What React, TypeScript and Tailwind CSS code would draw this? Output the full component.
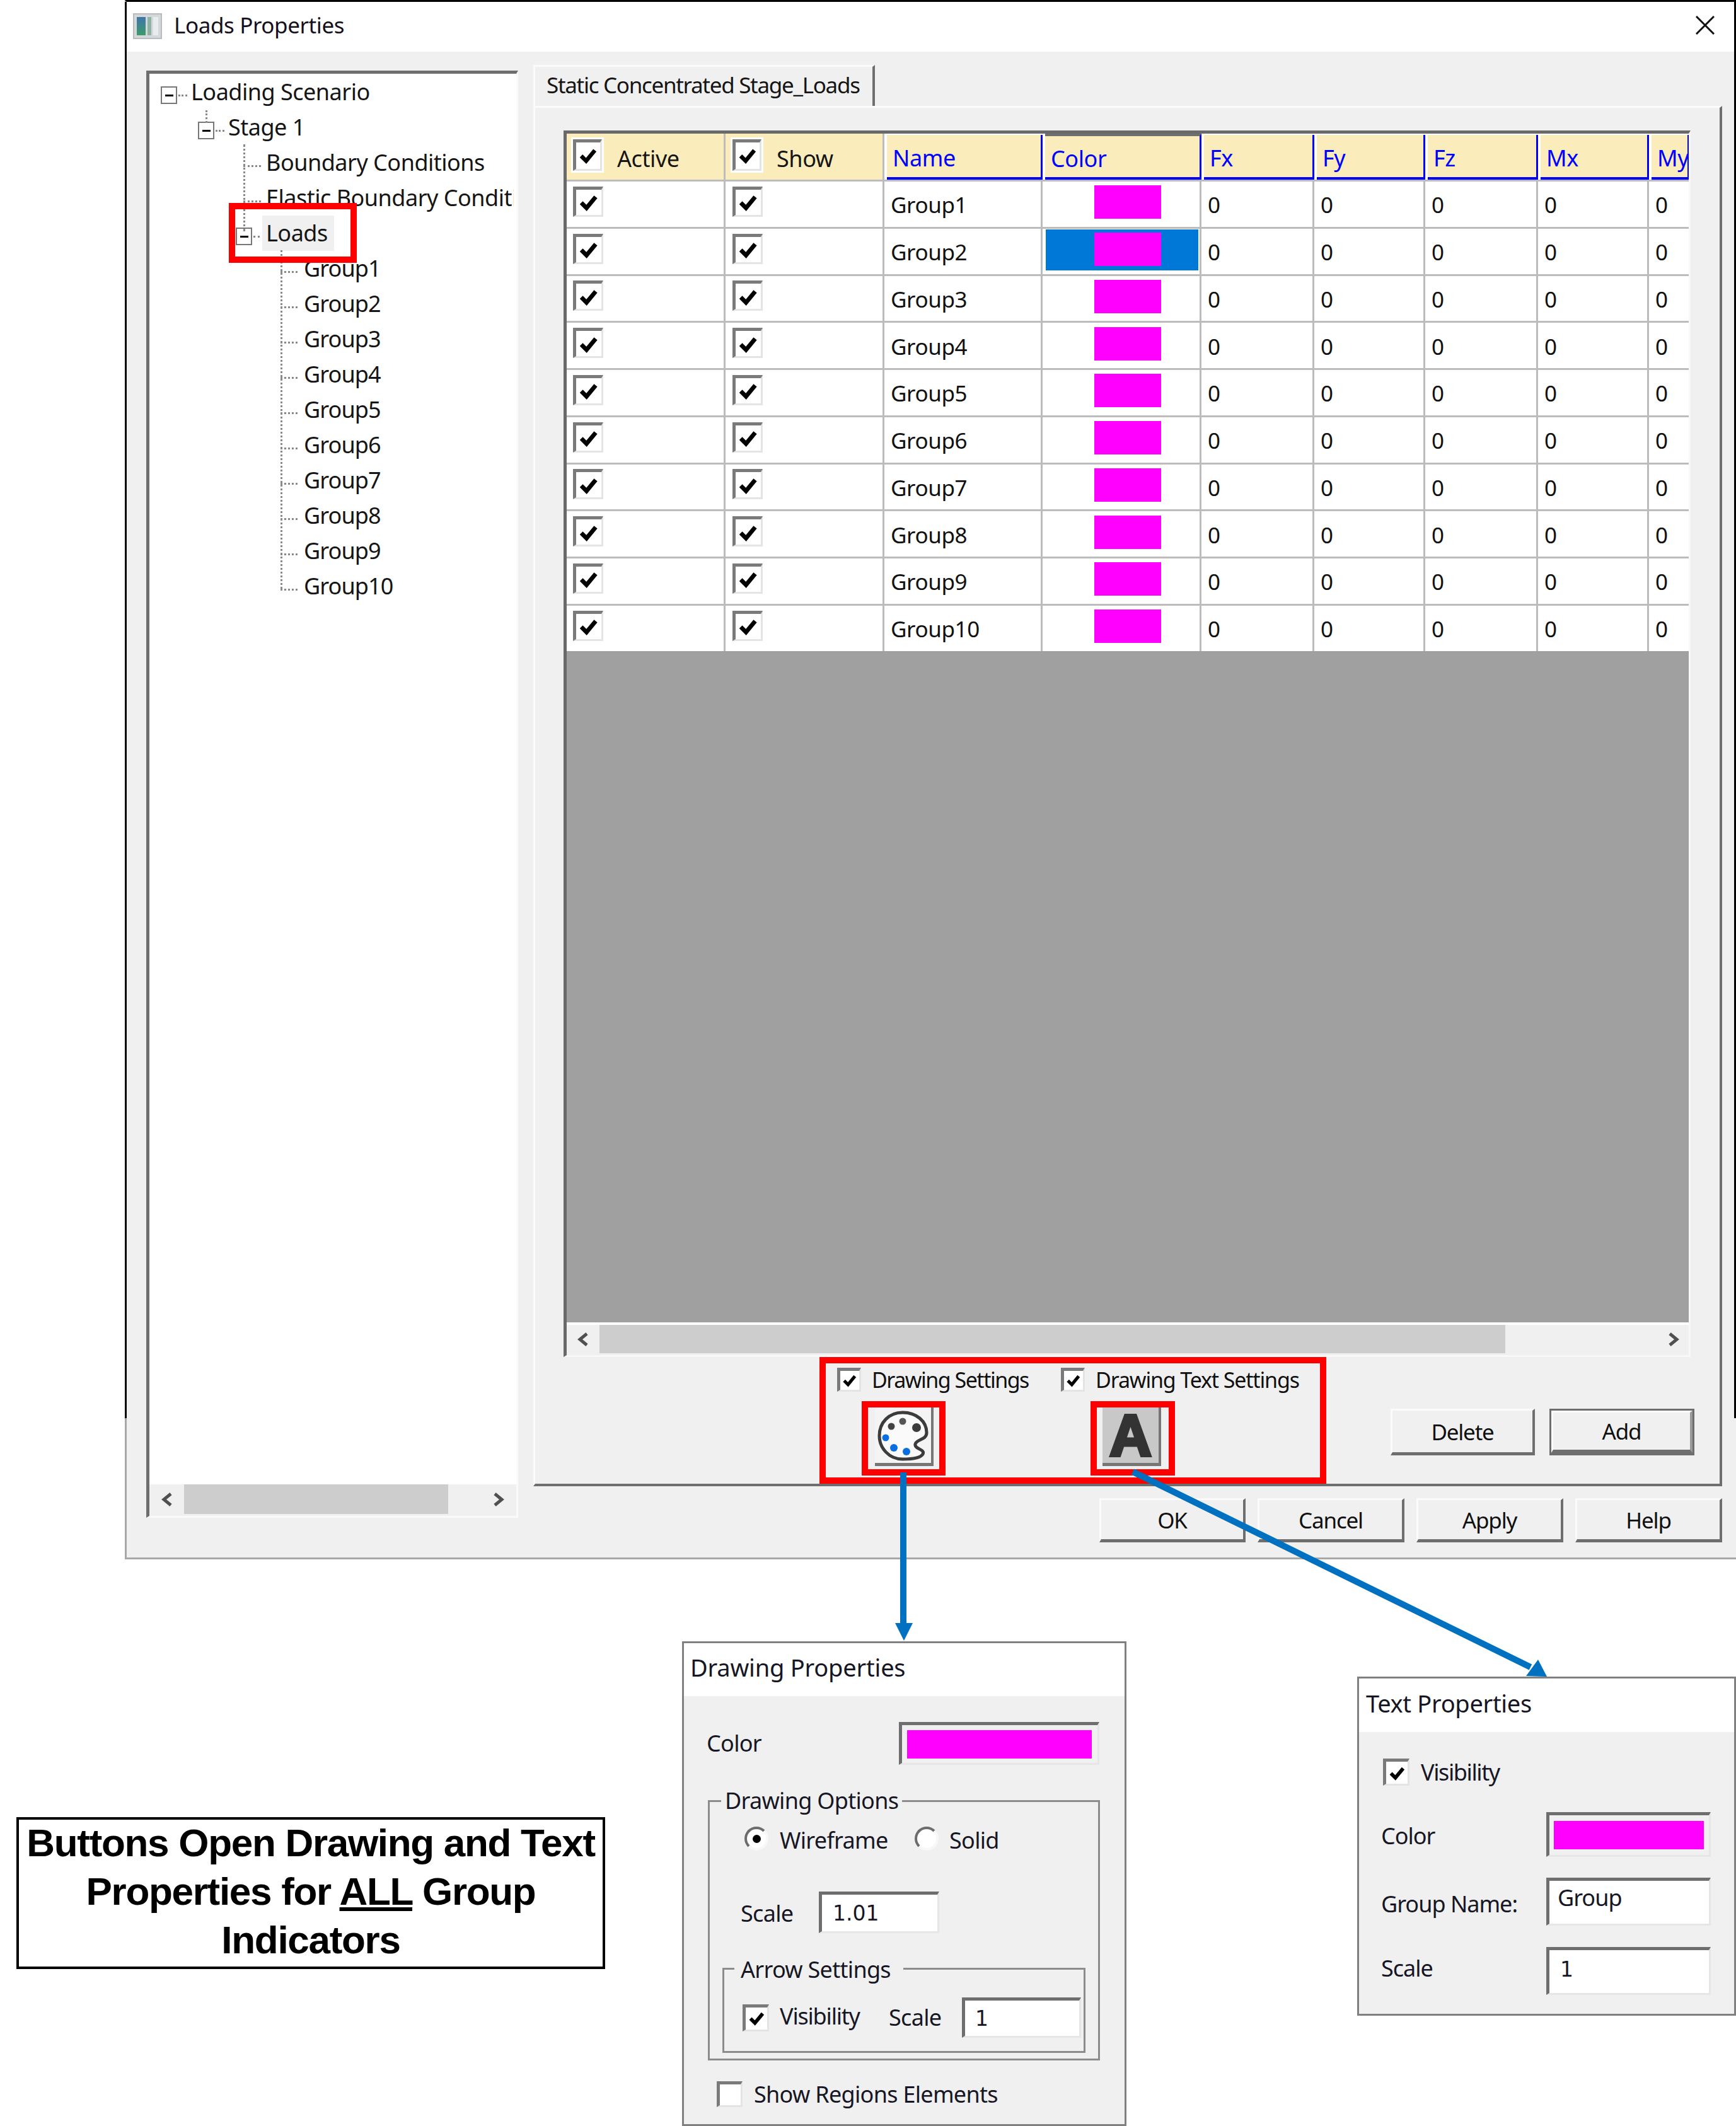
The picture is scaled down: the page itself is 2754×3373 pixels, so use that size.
import type { ReactNode } from "react";

const magenta = "bg-[#ff00ff]";
const gridCols = "grid grid-cols-[252px_252px_251px_252px_179px_176px_179px_176px_64px]";
const groups = ["Group1", "Group2", "Group3", "Group4", "Group5", "Group6", "Group7", "Group8", "Group9", "Group10"];

function Check({ size = "w-[48px] h-[48px]", checked = true, outlined = false }: { size?: string; checked?: boolean; outlined?: boolean }) {
  return (
    <span
      className={`${size} shrink-0 flex items-center justify-center bg-white border-t-[5px] border-l-[5px] border-r-[3px] border-b-[3px] border-t-[#7a7a7a] border-l-[#7a7a7a] border-r-[#e4e4e4] border-b-[#e4e4e4] ${outlined ? "outline-[3px] outline-white" : ""}`}
    >
      {checked && (
        <svg viewBox="0 0 30 30" className="w-[78%] h-[78%]">
          <path d="M4 16 L12 24 L26 7" fill="none" stroke="#000" strokeWidth="6.5" />
        </svg>
      )}
    </span>
  );
}

function Radio({ on = false }: { on?: boolean }) {
  return (
    <span className="w-[38px] h-[38px] shrink-0 rounded-full flex items-center justify-center bg-white border-[4px] border-t-[#6c6c6c] border-l-[#6c6c6c] border-r-[#f8f8f8] border-b-[#f8f8f8]">
      {on && <span className="w-[13px] h-[13px] rounded-full bg-black" />}
    </span>
  );
}

function WinButton({ label, className = "" }: { label: string; className?: string }) {
  return (
    <div
      className={`flex items-center justify-center bg-[#f0f0f0] border-t-[3px] border-l-[3px] border-r-[4px] border-b-[5px] border-t-[#fbfbfb] border-l-[#fbfbfb] border-r-[#6e6e6e] border-b-[#6e6e6e] text-[#101010] text-[35px] tracking-[-1.2px] ${className}`}
    >
      {label}
    </div>
  );
}

function Inset({ className = "", children }: { className?: string; children?: ReactNode }) {
  return (
    <div
      className={`shrink-0 flex items-center border-t-[5px] border-l-[5px] border-r-[3px] border-b-[3px] border-t-[#6e6e6e] border-l-[#6e6e6e] border-r-[#e6e6e6] border-b-[#e6e6e6] ${className}`}
    >
      {children}
    </div>
  );
}

function Chevron({ dir }: { dir: "left" | "right" }) {
  return (
    <svg viewBox="0 0 20 24" className="w-[20px] h-[24px] shrink-0">
      <path d={dir === "left" ? "M16 3 L5 12 L16 21" : "M4 3 L15 12 L4 21"} fill="none" stroke="#505050" strokeWidth="5" />
    </svg>
  );
}

function ExpandBox() {
  return (
    <span className="w-[26px] h-[28px] shrink-0 mt-[10px] flex items-center justify-center bg-white border-[2px] border-[#777777]">
      <span className="w-[13px] h-[3px] bg-black" />
    </span>
  );
}

function Dash({ className = "" }: { className?: string }) {
  return <span className={`h-0 border-t-[3px] border-dotted border-[#8a8a8a] shrink-0 ${className}`} />;
}

function TreePanel() {
  return (
    <div className="relative w-[590px] h-[2296px] flex flex-col border-t-[5px] border-l-[5px] border-r-[3px] border-b-[3px] border-t-[#6e6e6e] border-l-[#6e6e6e] border-r-[#fafafa] border-b-[#fafafa]">
      <div className="flex-1 min-h-0 bg-white pt-[1px] text-[36px] tracking-[-0.5px]">
        <div className="w-[578px] overflow-hidden whitespace-nowrap">
          <div className="h-[56px] flex items-center pl-[18px]">
            <ExpandBox />
            <Dash className="w-[14px] ml-[2px] mt-[10px] mr-[6px]" />
            Loading Scenario
          </div>
          <div className="h-[56px] flex items-center pl-[77px]">
            <ExpandBox />
            <Dash className="w-[14px] ml-[2px] mt-[10px] mr-[6px]" />
            Stage 1
          </div>
          <div className="h-[56px] flex items-center pl-[149px]">
            <Dash className="w-[28px] mt-[10px] mr-[8px]" />
            Boundary Conditions
          </div>
          <div className="h-[56px] flex items-center pl-[149px]">
            <Dash className="w-[28px] mt-[10px] mr-[8px]" />
            Elastic Boundary Conditions
          </div>
          <div className="h-[56px] flex items-center pl-[137px]">
            <ExpandBox />
            <Dash className="w-[10px] ml-[2px] mt-[10px] mr-[4px]" />
            <span className="h-[56px] flex items-center bg-[#f0f0f0] pl-[6px] pr-[10px]">Loads</span>
          </div>
          {groups.map((g) => (
            <div key={g} className="h-[56px] flex items-center pl-[208px] tracking-[-0.9px]">
              <Dash className="w-[27px] mt-[10px] mr-[10px]" />
              {g}
            </div>
          ))}
        </div>
        {/* tree guide lines */}
        <span className="absolute left-[149px] top-[112px] h-[138px] border-l-[3px] border-dotted border-[#8a8a8a]" />
        <span className="absolute left-[208px] top-[280px] h-[537px] border-l-[3px] border-dotted border-[#8a8a8a]" />
        <span className="absolute left-[89px] top-[58px] h-[20px] border-l-[3px] border-dotted border-[#8a8a8a]" />
      </div>
      <div className="h-[50px] shrink-0 flex items-center bg-[#f0f0f0] pb-[3px]">
        <span className="w-[55px] flex justify-center">
          <Chevron dir="left" />
        </span>
        <span className="w-[419px] h-[47px] bg-[#cdcdcd]" />
        <span className="flex-1 flex justify-center pl-[52px]">
          <Chevron dir="right" />
        </span>
      </div>
    </div>
  );
}

function HeaderCell({ label, selected = false }: { label: string; selected?: boolean }) {
  return (
    <div className={`bg-white pl-[4px] ${selected ? "" : "pt-[2px]"} h-[73px]`}>
      <div
        className={`h-full pl-[9px] pt-[6px] flex items-center overflow-hidden bg-[#fbecbb] text-[#0000ff] border-r-[3px] border-b-[4px] border-[#0000ff] ${selected ? "border-t-[4px] border-t-[#6e6e6e]" : ""}`}
      >
        {label}
      </div>
    </div>
  );
}

function HeaderCheck({ label, className }: { label: string; className: string }) {
  return (
    <div className={`h-[73px] flex items-center bg-[#fbecbb] border-r-[3px] border-[#bcbcbc] ${className}`}>
      <Check outlined size="w-[46px] h-[50px] mt-[-6px]" />
      <span className="ml-[24px] pt-[6px] text-[#151515]">{label}</span>
    </div>
  );
}

function DataGrid() {
  return (
    <div className="w-[1788px] h-[1946px] flex flex-col border-t-[5px] border-l-[5px] border-r-[3px] border-b-[3px] border-t-[#696969] border-l-[#696969] border-r-[#f8f8f8] border-b-[#f8f8f8] overflow-hidden text-[36px] tracking-[-0.4px]">
      <div className={`${gridCols} bg-white`}>
        <HeaderCheck label="Active" className="pl-[10px]" />
        <HeaderCheck label="Show" className="pl-[11px]" />
        <HeaderCell label="Name" />
        <HeaderCell label="Color" selected />
        <HeaderCell label="Fx" />
        <HeaderCell label="Fy" />
        <HeaderCell label="Fz" />
        <HeaderCell label="Mx" />
        <HeaderCell label="My" />
      </div>
      {groups.map((g) => (
        <div key={g} className={`${gridCols} h-[74.75px] bg-white border-t-[3px] border-[#bcbcbc] text-[35px] text-[#111111]`}>
          <div className="flex items-center pl-[10px] pb-[8px] border-r-[3px] border-[#bcbcbc]">
            <Check />
          </div>
          <div className="flex items-center pl-[11px] pb-[8px] border-r-[3px] border-[#bcbcbc]">
            <Check />
          </div>
          <div className="flex items-center pl-[10px] pt-[2px] border-r-[3px] border-[#bcbcbc]">{g}</div>
          <div className="flex items-center pl-[5px] pb-[4px] border-r-[3px] border-[#bcbcbc]">
            <div className={`w-[242px] h-[65px] flex items-center pl-[77px] pb-[2px] ${g === "Group2" ? "bg-[#0078d7]" : ""}`}>
              <span className={`w-[106px] h-[53px] ${magenta}`} />
            </div>
          </div>
          {[0, 1, 2, 3, 4].map((i) => (
            <div key={i} className={`flex items-center pl-[10px] pt-[2px] ${i < 4 ? "border-r-[3px] border-[#bcbcbc]" : ""}`}>
              0
            </div>
          ))}
        </div>
      ))}
      <div className="flex-1 bg-[#a0a0a0]" />
      <div className="h-[52px] shrink-0 flex items-center bg-[#f0f0f0] border-t-[4px] border-white pb-[3px]">
        <span className="w-[52px] flex justify-center">
          <Chevron dir="left" />
        </span>
        <span className="w-[1437px] h-[45px] bg-[#cdcdcd]" />
        <span className="flex-1 flex justify-center pl-[242px]">
          <Chevron dir="right" />
        </span>
      </div>
    </div>
  );
}

function PaletteIcon() {
  return (
    <svg viewBox="0 0 81 81" className="w-[81px] h-[81px]">
      <path
        d="M40 4 C62 4 78 18 78 36 C78 48 62 46 60 54 C58 62 76 62 72 70 C68 77 52 78 40 78 C18 78 3 60 3 41 C3 20 18 4 40 4 Z"
        fill="#fafafa"
        stroke="#3c3c3c"
        strokeWidth="5"
      />
      <circle cx="22" cy="26" r="5.5" fill="#444" />
      <circle cx="40" cy="18" r="5.5" fill="#555" />
      <circle cx="62" cy="28" r="7" fill="#3c3c3c" />
      <circle cx="13" cy="44" r="5.5" fill="#0a6ee0" />
      <circle cx="26" cy="60" r="6" fill="#0a6ee0" />
      <circle cx="46" cy="66" r="6" fill="#0a6ee0" />
    </svg>
  );
}

function RaisedIcon({ className = "", children }: { className?: string; children: ReactNode }) {
  return (
    <div className={`w-[93px] h-[93px] flex items-center justify-center border-r-[4px] border-b-[5px] border-r-[#767676] border-b-[#767676] ${className}`}>
      {children}
    </div>
  );
}

function TabPane() {
  return (
    <div className="w-[1886px] h-[2190px] pt-[36px] pl-[45px] border-t-[3px] border-l-[3px] border-r-[4px] border-b-[4px] border-t-[#fbfbfb] border-l-[#fbfbfb] border-r-[#6e6e6e] border-b-[#6e6e6e]">
      <DataGrid />
      <div className="flex text-[34px] tracking-[-1.5px] pt-[17px] pl-[434px] text-[#101010] whitespace-nowrap">
        <div className="w-[355px] shrink-0">
          <div className="flex items-center gap-[17px] h-[38px]">
            <Check size="w-[38px] h-[38px]" />
            <span>Drawing Settings</span>
          </div>
          <RaisedIcon className="ml-[60px] mt-[25px] bg-[#f4f4f4]">
            <PaletteIcon />
          </RaisedIcon>
        </div>
        <div className="w-[378px] shrink-0">
          <div className="flex items-center gap-[17px] h-[38px]">
            <Check size="w-[38px] h-[38px]" />
            <span className="tracking-[-1.15px]">Drawing Text Settings</span>
          </div>
          <RaisedIcon className="ml-[66px] mt-[25px] bg-[#c8c8c8]">
            <span className="font-['Liberation_Sans',sans-serif] font-bold text-[92px] leading-none text-[#333333] [-webkit-text-stroke:5px_#333333] tracking-normal">A</span>
          </RaisedIcon>
        </div>
        <div className="flex mt-[65px] gap-[23px] ml-[145px]">
          <WinButton label="Delete" className="w-[229px] h-[74px]" />
          <div className="w-[230px] h-[74px] border-[3px] border-[#6e6e6e] border-b-[4px]">
            <WinButton label="Add" className="w-full h-full border-t-[#eeeeee] border-l-[#eeeeee] border-r-[#9a9a9a]" />
          </div>
        </div>
      </div>
    </div>
  );
}

function LoadsDialog() {
  return (
    <div className="relative ml-[198px] w-[2556px] h-[2474px] flex flex-col border-t-[3px] border-l-[3px] border-b-[3px] border-[#a8a8a8] border-t-black bg-white">
      <span className="absolute left-[-3px] top-0 w-[3px] h-[2247px] bg-black" />
      <span className="absolute right-0 top-0 w-[3px] h-[2247px] bg-black" />
      <div className="h-[79px] shrink-0 flex items-center pl-[10px] pr-[34px] pb-[6px]">
        <div className="w-[46px] h-[41px] flex bg-[#d5d8da] border-[2px] border-[#b8bcbf] p-[4px] gap-[3px] mt-[4px]">
          <span className="w-[14px] bg-gradient-to-b from-[#3f74a8] to-[#3f9a68]" />
          <span className="w-[6px] bg-[#8fb2a4]" />
          <span className="flex-1 bg-[#e9ecec]" />
        </div>
        <span className="ml-[19px] text-[35px] tracking-[-0.4px] text-[#151020]">Loads Properties</span>
        <svg viewBox="0 0 30 30" className="ml-auto w-[30px] h-[30px]">
          <path d="M1 1 L29 29 M29 1 L1 29" stroke="#111" strokeWidth="3" fill="none" />
        </svg>
      </div>
      <div className="flex-1 flex bg-[#f0f0f0] pl-[31px] pt-[30px]">
        <TreePanel />
        <div className="ml-[24px] mt-[-9px] flex flex-col">
          <div className="w-[542px] h-[65px] flex items-center pl-[18px] pb-[6px] border-t-[3px] border-l-[3px] border-r-[4px] border-t-[#fbfbfb] border-l-[#fbfbfb] border-r-[#6e6e6e] text-[35px] tracking-[-1.3px] text-[#151515]">
            Static Concentrated Stage_Loads
          </div>
          <TabPane />
          <div className="flex justify-end gap-[19px] mt-[19px]">
            <WinButton label="OK" className="w-[232px] h-[70px]" />
            <WinButton label="Cancel" className="w-[233px] h-[70px]" />
            <WinButton label="Apply" className="w-[233px] h-[70px]" />
            <WinButton label="Help" className="w-[233px] h-[70px]" />
          </div>
        </div>
      </div>
    </div>
  );
}

function DrawingProperties() {
  return (
    <div className="ml-[122px] mt-[130px] w-[705px] h-[769px] shrink-0 flex flex-col border-[3px] border-[#808080] text-[36px] tracking-[-0.7px] text-[#161625]">
      <div className="h-[84px] shrink-0 flex items-center pl-[10px] pb-[8px] bg-white text-[38px] tracking-[-0.2px]">Drawing Properties</div>
      <div className="flex-1 bg-[#f0f0f0]">
        <div className="flex items-center mt-[41px] pl-[36px]">
          <span className="w-[305px]">Color</span>
          <Inset className="w-[318px] h-[68px] pl-[8px] pr-[9px]">
            <span className={`w-full h-[45px] ${magenta}`} />
          </Inset>
        </div>
        <div className="relative ml-[38px] mt-[56px] w-[622px] h-[413px] border-[3px] border-[#8c8c8c]">
          <span className="absolute left-[18px] top-[-20px] px-[6px] bg-[#f0f0f0]">Drawing Options</span>
          <div className="flex items-center mt-[37px] ml-[55px]">
            <span className="w-[270px] flex items-center gap-[18px]">
              <Radio on />
              <span className="pt-[6px]">Wireframe</span>
            </span>
            <span className="flex items-center gap-[17px]">
              <Radio />
              <span className="pt-[6px]">Solid</span>
            </span>
          </div>
          <div className="flex items-center mt-[63px] ml-[49px]">
            <span className="w-[124px] pt-[4px]">Scale</span>
            <Inset className="w-[191px] h-[66px] bg-white pl-[17px] font-['DejaVu_Sans',sans-serif] text-[33px] tracking-normal">1.01</Inset>
          </div>
          <div className="relative ml-[20px] mt-[55px] w-[576px] h-[135px] border-[3px] border-[#8c8c8c]">
            <span className="absolute left-[16px] top-[-18px] pl-[10px] pr-[20px] bg-[#f0f0f0]">Arrow Settings</span>
            <div className="flex items-center pl-[29px] pt-[44px]">
              <Check size="w-[42px] h-[43px]" />
              <span className="w-[173px] ml-[17px] tracking-[-1.2px] pb-[4px]">Visibility</span>
              <span className="w-[116px]">Scale</span>
              <Inset className="w-[189px] h-[64px] bg-white pl-[16px] font-['DejaVu_Sans',sans-serif] text-[33px] tracking-normal">1</Inset>
            </div>
          </div>
        </div>
        <div className="flex items-center gap-[18px] mt-[33px] ml-[52px]">
          <Check size="w-[41px] h-[41px]" checked={false} />
          Show Regions Elements
        </div>
      </div>
    </div>
  );
}

function TextProperties() {
  return (
    <div className="ml-[366px] mt-[186px] w-[601px] h-[538px] shrink-0 flex flex-col border-[3px] border-[#808080] text-[36px] tracking-[-1px] text-[#161625]">
      <div className="h-[85px] shrink-0 flex items-center pl-[11px] pb-[8px] bg-white text-[38px] tracking-[-0.3px]">Text Properties</div>
      <div className="flex-1 bg-[#f0f0f0]">
        <div className="flex items-center gap-[18px] mt-[42px] ml-[38px] tracking-[-1.4px]">
          <Check size="w-[42px] h-[43px]" />
          Visibility
        </div>
        <div className="flex items-center mt-[42px] pl-[35px]">
          <span className="w-[262px] pt-[4px]">Color</span>
          <Inset className="w-[261px] h-[71px] pl-[7px] pr-[8px]">
            <span className={`w-full h-[45px] ${magenta}`} />
          </Inset>
        </div>
        <div className="flex items-center mt-[33px] pl-[35px]">
          <span className="w-[262px] pt-[8px]">Group Name:</span>
          <Inset className="w-[261px] h-[76px] bg-white pl-[13px] pb-[14px]">Group</Inset>
        </div>
        <div className="flex items-center mt-[34px] pl-[35px]">
          <span className="w-[262px] pb-[8px]">Scale</span>
          <Inset className="w-[261px] h-[76px] bg-white pl-[17px] pb-[8px] font-['DejaVu_Sans',sans-serif] text-[33px] tracking-normal">1</Inset>
        </div>
      </div>
    </div>
  );
}

export default function App() {
  return (
    <div className="relative w-[2754px] h-[3373px] overflow-hidden bg-white font-['Noto_Sans',sans-serif] text-[34px] tracking-[-0.4px] leading-none text-[#151515]">
      <LoadsDialog />
      <div className="flex items-start">
        <div className="ml-[26px] mt-[409px] w-[934px] h-[241px] shrink-0 flex flex-col items-center justify-center pb-[6px] border-[4px] border-black font-['Liberation_Sans',sans-serif] font-bold text-[62px] leading-[77px] tracking-[-1.3px] text-black">
          <div>Buttons Open Drawing and Text</div>
          <div>
            Properties for <span className="underline">ALL</span> Group
          </div>
          <div>Indicators</div>
        </div>
        <DrawingProperties />
        <TextProperties />
      </div>

      {/* red callouts */}
      <div className="absolute left-[363px] top-[322px] w-[203px] h-[95px] border-[10px] border-[#fe0000]" />
      <div className="absolute left-[1300px] top-[2153px] w-[804px] h-[201px] border-[10px] border-[#fe0000]" />
      <div className="absolute left-[1367px] top-[2223px] w-[133px] h-[118px] border-[10px] border-[#fe0000]" />
      <div className="absolute left-[1730px] top-[2223px] w-[134px] h-[118px] border-[10px] border-[#fe0000]" />

      {/* blue arrows */}
      <svg className="absolute left-0 top-0 w-[2754px] h-[3373px] pointer-events-none" viewBox="0 0 2754 3373">
        <path d="M1433 2336 L1433 2580" stroke="#0070c0" strokeWidth="10" fill="none" />
        <polygon points="1420,2575 1448,2575 1434,2603" fill="#0070c0" />
        <path d="M1797 2335 L2428 2645" stroke="#0070c0" strokeWidth="10" fill="none" />
        <polygon points="2454,2660 2421,2659 2440,2633" fill="#0070c0" />
      </svg>
    </div>
  );
}
